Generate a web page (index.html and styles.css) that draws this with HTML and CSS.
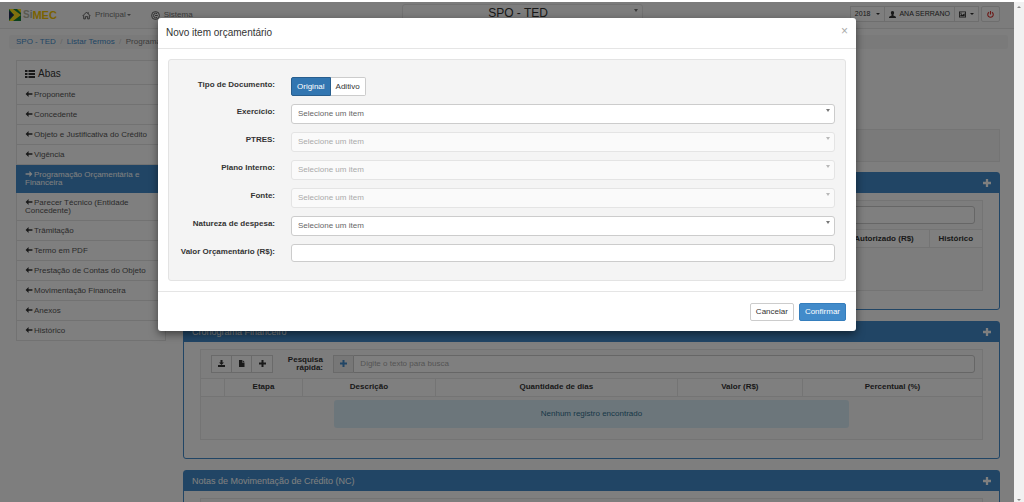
FILE: index.html
```html
<!DOCTYPE html>
<html lang="pt-BR">
<head>
<meta charset="utf-8">
<title>SIMEC - SPO - TED</title>
<link rel="stylesheet" href="styles.css">
</head>
<body>
<svg class="sprite" aria-hidden="true">
  <symbol id="i-left" viewBox="0 0 16 14"><path d="M0 7 7 0v5h9v4H7v5z"/></symbol>
  <symbol id="i-right" viewBox="0 0 16 14"><path d="M16 7 9 0v5H0v4h9v5z"/></symbol>
  <symbol id="i-plus" viewBox="0 0 14 14"><path d="M5 0h4v5h5v4H9v5H5V9H0V5h5z"/></symbol>
  <symbol id="i-list" viewBox="0 0 20 16"><path d="M0 0h5v4H0zM7 0h13v4H7zM0 6h5v4H0zM7 6h13v4H7zM0 12h5v4H0zM7 12h13v4H7z"/></symbol>
  <symbol id="i-down" viewBox="0 0 14 14"><path d="M5 0h4v5h3L7 10 2 5h3zM0 10h14v4H0z"/></symbol>
  <symbol id="i-file" viewBox="0 0 12 14"><path d="M1 0h6v5h5v9H1zM8 0l4 4H8z"/></symbol>
  <symbol id="i-user" viewBox="0 0 14 14"><path d="M7 0c2.400 0 3.400 1.700 3.200 4-.1 1.500-.7 2.600-1.400 3.300v1.500L13 11c.7.400 1 1 1 3H0c0-2 .3-2.600 1-3l4.200-2.200V7.300C4.500 6.600 3.900 5.500 3.800 4 3.600 1.700 4.600 0 7 0z"/></symbol>
  <symbol id="i-picture" viewBox="0 0 16 14"><path fill-rule="evenodd" d="M0 0h16v14H0zM2 2v10h12V2zM3 11V8l3-2 2 2 4-4 1 2v5zM3 3h3v2H3z"/></symbol>
  <symbol id="i-power" viewBox="0 0 14 14"><path fill="none" stroke="currentColor" stroke-width="2.200" d="M4 2.500a5.500 5.500 0 1 0 6 0M7 0v7"/></symbol>
  <symbol id="i-home" viewBox="0 0 16 16"><path fill="none" stroke="currentColor" stroke-width="1.600" d="M1 9 8 2l7 7M3 8v6h3v-4h4v4h3V8M11 2v3"/></symbol>
  <symbol id="i-target" viewBox="0 0 16 16"><path fill="none" stroke="currentColor" stroke-width="1.600" d="M8 1a7 7 0 1 0 7 7 7 7 0 0 0-7-7zM11 5a4 4 0 1 0 0 6M7 8h5"/></symbol>
</svg>

<div class="window">
  <div class="viewport">
    <header class="navbar">
      <nav class="nav-left">
        <a class="brand" href="#" aria-label="SIMEC">
          <svg class="flag" viewBox="0 0 12 12" aria-hidden="true"><path fill="#17823b" d="M0 0h12v12H0z"/><path fill="#ffe01c" d="M0 0h4l8 6-8 6H0l5-6z"/><path fill="#222a55" d="M0 2 5 6 0 10z"/><path fill="#ffe01c" d="M8 0h4v4z"/></svg>
          <span class="brand-si">Si</span><span class="brand-mec">MEC</span>
        </a>
        <a class="nav-link" href="#"><svg class="nav-icon"><use href="#i-home"/></svg>Principal<span class="caret"></span></a>
        <a class="nav-link" href="#"><svg class="nav-icon"><use href="#i-target"/></svg>Sistema</a>
      </nav>
      <div class="select-wrap">
        <select class="module" aria-label="Módulo"><option>SPO - TED</option></select>
      </div>
      <div class="nav-right">
        <div class="group">
          <button class="tool" type="button">2018 <span class="caret wide"></span></button>
          <button class="tool" type="button"><svg class="icon"><use href="#i-user"/></svg>ANA SERRANO</button>
          <button class="tool" type="button" aria-label="Tema"><svg class="icon"><use href="#i-picture"/></svg><span class="caret"></span></button>
        </div>
        <button class="tool power" type="button" aria-label="Sair"><svg class="icon"><use href="#i-power"/></svg></button>
      </div>
    </header>

    <nav class="breadcrumb">
      <a href="#">SPO - TED</a><i>/</i><a href="#">Listar Termos</a><i>/</i><span>Programação Orçamentária</span>
    </nav>

    <div class="columns">
      <aside class="tabs">
        <h2 class="tabs-title"><svg class="list-icon"><use href="#i-list"/></svg>Abas</h2>
        <a href="#"><svg class="arrow"><use href="#i-left"/></svg>Proponente</a>
        <a href="#"><svg class="arrow"><use href="#i-left"/></svg>Concedente</a>
        <a href="#"><svg class="arrow"><use href="#i-left"/></svg>Objeto e Justificativa do Crédito</a>
        <a href="#"><svg class="arrow"><use href="#i-left"/></svg>Vigência</a>
        <a class="active" href="#"><svg class="arrow"><use href="#i-right"/></svg>Programação Orçamentária e Financeira</a>
        <a href="#"><svg class="arrow"><use href="#i-left"/></svg>Parecer Técnico (Entidade Concedente)</a>
        <a href="#"><svg class="arrow"><use href="#i-left"/></svg>Trâmitação</a>
        <a href="#"><svg class="arrow"><use href="#i-left"/></svg>Termo em PDF</a>
        <a href="#"><svg class="arrow"><use href="#i-left"/></svg>Prestação de Contas do Objeto</a>
        <a href="#"><svg class="arrow"><use href="#i-left"/></svg>Movimentação Financeira</a>
        <a href="#"><svg class="arrow"><use href="#i-left"/></svg>Anexos</a>
        <a href="#"><svg class="arrow"><use href="#i-left"/></svg>Histórico</a>
      </aside>

      <main class="content">
        <div class="summary"></div>

        <section class="panel">
          <h3 class="panel-head"><span></span><svg class="expand"><use href="#i-plus"/></svg></h3>
          <div class="panel-body">
            <div class="listing">
              <div class="search-row">
                <div></div><div></div>
                <div class="search"><input type="text" aria-label="Pesquisa"></div>
              </div>
              <table class="grid">
                <colgroup><col class="w-rest"><col class="w-aut"><col class="w-hist"></colgroup>
                <thead><tr><th></th><th>Autorizado (R$)</th><th>Histórico</th></tr></thead>
                <tbody><tr><td colspan="3"></td></tr></tbody>
              </table>
            </div>
          </div>
        </section>

        <section class="panel">
          <h3 class="panel-head"><span>Cronograma Financeiro</span><svg class="expand"><use href="#i-plus"/></svg></h3>
          <div class="panel-body">
            <div class="listing">
              <div class="search-row">
                <div class="group">
                  <button class="act" type="button" aria-label="Baixar"><svg class="icon"><use href="#i-down"/></svg></button>
                  <button class="act" type="button" aria-label="Arquivo"><svg class="icon"><use href="#i-file"/></svg></button>
                  <button class="act" type="button" aria-label="Adicionar"><svg class="icon"><use href="#i-plus"/></svg></button>
                </div>
                <label for="busca">Pesquisa rápida:</label>
                <div class="search">
                  <button class="addon" type="button" aria-label="Mais filtros"><svg class="icon"><use href="#i-plus"/></svg></button>
                  <input id="busca" type="text" placeholder="Digite o texto para busca">
                </div>
              </div>
              <table class="grid">
                <colgroup><col class="w-a"><col class="w-b"><col class="w-c"><col class="w-d"><col class="w-e"><col class="w-f"></colgroup>
                <thead><tr><th></th><th>Etapa</th><th>Descrição</th><th>Quantidade de dias</th><th>Valor (R$)</th><th>Percentual (%)</th></tr></thead>
                <tbody><tr><td colspan="6"><div class="alert">Nenhum registro encontrado</div></td></tr></tbody>
              </table>
            </div>
          </div>
        </section>

        <section class="panel">
          <h3 class="panel-head"><span>Notas de Movimentação de Crédito (NC)</span><svg class="expand"><use href="#i-plus"/></svg></h3>
          <div class="panel-body"><div class="listing"><div class="search-row"></div></div></div>
        </section>
      </main>
    </div>

    <div class="backdrop">
      <form class="modal" role="dialog" aria-labelledby="titulo">
        <div class="modal-head">
          <h1 id="titulo">Novo item orçamentário</h1>
          <button class="close" type="button" aria-label="Fechar">×</button>
        </div>
        <div class="modal-body">
          <div class="well">
            <div class="field" role="group" aria-labelledby="tipo">
              <span class="label" id="tipo">Tipo de Documento:</span>
              <div class="group">
                <button class="btn toggle on" type="button" aria-pressed="true">Original</button>
                <button class="btn toggle" type="button" aria-pressed="false">Aditivo</button>
              </div>
            </div>
            <div class="field"><label class="label" for="exercicio">Exercício:</label><div class="select-wrap"><select id="exercicio"><option>Selecione um item</option></select></div></div>
            <div class="field"><label class="label" for="ptres">PTRES:</label><div class="select-wrap off"><select id="ptres" disabled><option>Selecione um item</option></select></div></div>
            <div class="field"><label class="label" for="plano">Plano Interno:</label><div class="select-wrap off"><select id="plano" disabled><option>Selecione um item</option></select></div></div>
            <div class="field"><label class="label" for="fonte">Fonte:</label><div class="select-wrap off"><select id="fonte" disabled><option>Selecione um item</option></select></div></div>
            <div class="field"><label class="label" for="natureza">Natureza de despesa:</label><div class="select-wrap"><select id="natureza"><option>Selecione um item</option></select></div></div>
            <div class="field"><label class="label" for="valor">Valor Orçamentário (R$):</label><input id="valor" type="text"></div>
          </div>
        </div>
        <div class="modal-foot">
          <button class="btn" type="button">Cancelar</button>
          <button class="btn primary" type="submit">Confirmar</button>
        </div>
      </form>
    </div>
  </div>
  <div class="scrollbar" aria-hidden="true"><span class="up"></span><span class="dn"></span></div>
</div>
</body>
</html>
```

FILE: styles.css
```css
* { box-sizing: border-box; }
body { margin: 0; height: 100vh; overflow: hidden; background: #fff; color: #333; font: 8px/10px "Liberation Sans", Arial, sans-serif; }
button, input, select { font: inherit; color: inherit; margin: 0; }
h1, h2, h3 { margin: 0; font-weight: 400; }
a { text-decoration: none; color: #428bca; }
svg { fill: currentColor; }
.sprite { position: absolute; width: 0; height: 0; }
.window { display: flex; height: 100vh; padding-top: 2px; }
.viewport { position: relative; flex: 1; min-width: 0; overflow: hidden; background: #fdfdfd; }
.scrollbar { width: 10px; background: #f1f1f1; display: flex; flex-direction: column; justify-content: space-between; align-items: center; padding: 4px 0 1px; }
.scrollbar span { border: 2px solid transparent; }
.scrollbar .up { border-top: 0; border-bottom-color: #888; }
.scrollbar .dn { border-bottom: 0; border-top-color: #888; }

.icon { width: 7px; height: 7px; }
.caret { border: 2px solid transparent; border-top-color: currentColor; border-bottom: 0; margin-left: 1px; }
.caret.wide { margin-left: 6px; }
.group { display: flex; }

/* top bar */
.navbar { display: grid; grid-template-columns: 40fr 24fr 37fr; height: 27px; background: #f8f8f8; border-bottom: 1px solid #e4e4e4; }
.nav-left { display: flex; align-items: center; padding-left: 9px; color: #777; }
.brand { display: flex; align-items: center; width: 73px; font-weight: 700; font-size: 11px; }
.flag { width: 12px; height: 12px; margin-right: 2px; }
.brand-si { color: #b5b5a0; font-size: 10px; }
.brand-mec { color: #f5c400; }
.nav-link { display: flex; align-items: center; color: #777; margin-right: 20px; }
.nav-icon { width: 9px; height: 9px; margin-right: 4px; color: #555; }
.nav-right { display: flex; gap: 3px; justify-content: flex-end; align-items: flex-start; padding: 4px 14px 0 0; }
.tool { display: flex; align-items: center; height: 16px; padding: 0 4px; border: 1px solid #ddd; margin-left: -1px; background: #fcfcfc; font-size: 7px; white-space: nowrap; }
.tool .icon { margin-right: 3px; }
.power { color: #d9302c; border-radius: 2px; padding: 0 5px; }
.power .icon { margin: 0; }

.select-wrap { position: relative; }
.select-wrap::after { content: ""; position: absolute; right: 5px; top: 5px; border: 2px solid transparent; border-top: 3px solid #777; border-bottom: 0; pointer-events: none; }
.select-wrap.off::after { opacity: .5; }
select { appearance: none; display: block; width: 100%; height: 20px; padding: 0 6px; border: 1px solid #ccc; border-radius: 3px; background: #fff; color: #666; }
select:disabled { background: #fafafa; border-color: #e4e4e4; color: #aaa; opacity: 1; }
.navbar .select-wrap { padding-top: 2px; }
.navbar .select-wrap::after { top: 7px; }
.module { height: 18px; font-size: 12px; text-align: center; text-align-last: center; color: #333; background: #fbfbfb; border-color: #e4e4e4; padding: 0 16px 0 8px; }

.breadcrumb { display: flex; margin: 6px 6px 0 9px; padding: 2px 7px; height: 14px; background: #f5f5f5; border-radius: 2px; color: #777; }
.breadcrumb i { width: 11px; text-align: center; font-style: normal; color: #ccc; }

/* page columns */
.columns { display: grid; grid-template-columns: 150px 1fr; gap: 17px; padding: 11px 14px 0 16px; }
.tabs { align-self: start; border: 1px solid #e4e4e4; border-bottom: 0; background: #fff; }
.tabs-title { display: flex; align-items: center; height: 24px; padding: 2px 8px 0; border-bottom: 1px solid #e4e4e4; font-size: 10px; }
.list-icon { width: 10px; height: 8px; margin-right: 3px; }
.tabs a { display: block; padding: 6px 16px 5px 8px; border-bottom: 1px solid #e4e4e4; color: #555; line-height: 8px; }
.tabs a.active { margin-left: -1px; padding-left: 9px; background: #428bca; border-color: #428bca; color: #fff; }
.arrow { width: 8px; height: 6px; margin-right: 1px; color: #333; }
.active .arrow { color: #fff; }

.summary { height: 33px; margin: 69px 0 10px; background: #f5f5f5; border: 1px solid #e8e8e8; }
.panel { margin-bottom: 11px; border: 1px solid #428bca; border-radius: 3px; background: #fff; }
.panel-head { display: flex; align-items: center; justify-content: space-between; height: 20px; padding: 0 8px; background: #428bca; color: #fff; font-size: 9px; }
.expand { width: 8px; height: 8px; }
.panel-body { padding: 7px 16px 18px; }
.listing { border: 1px solid #e8e8e8; background: #fafafa; }
.search-row { display: grid; grid-template-columns: 62px 40px 1fr; align-items: center; column-gap: 10px; padding: 5px 7px 5px 10px; }
.search-row label { text-align: right; font-weight: 700; line-height: 8px; }
.act, .addon { display: grid; place-items: center; width: 21px; height: 18px; padding: 0; border: 1px solid #d4d4d4; background: #fff; }
.act + .act { border-left: 0; }
.search { display: flex; }
.addon { background: #eee; color: #428bca; border-right: 0; }
input { display: block; width: 100%; height: 18px; padding: 0 6px; border: 1px solid #ccc; border-radius: 3px; background: #fff; }
.addon + input { border-radius: 0 3px 3px 0; }
input::placeholder { color: #aaa; opacity: 1; }
.grid { width: 100%; border-collapse: collapse; table-layout: fixed; }
.grid th { height: 18px; padding: 0; background: #fff; border: 1px solid #e8e8e8; border-width: 1px 1px 1px 0; text-align: center; }
.grid th:last-child { border-right: 0; }
.grid td { height: 42px; padding: 3px 0 11px; vertical-align: top; }
.w-aut { width: 90px; } .w-hist { width: 53px; }
.w-a { width: 3%; } .w-b { width: 10%; } .w-c { width: 17%; } .w-d { width: 31%; } .w-e { width: 16%; } .w-f { width: 23%; }
.alert { width: 66%; margin: 0 auto; padding: 9px 0; border-radius: 3px; background: #d9edf7; color: #31708f; text-align: center; }

/* dialog */
.backdrop { position: absolute; inset: 0; padding-top: 16px; background: rgba(0, 0, 0, .5); }
.modal { max-width: 698px; margin: 0 auto; border-radius: 3px; background: #fff; box-shadow: 0 3px 8px rgba(0, 0, 0, .5); }
.modal-head { display: flex; align-items: center; justify-content: space-between; height: 31px; padding: 0 8px; border-bottom: 1px solid #e5e5e5; }
.modal-head h1 { font-size: 10px; line-height: 12px; }
.close { padding: 0; border: 0; background: none; color: #aaa; font-size: 12px; line-height: 12px; margin-bottom: 4px; }
.modal-body { padding: 10px; }
.well { display: grid; gap: 8px; padding: 17px 10px 18px; border: 1px solid #e3e3e3; border-radius: 3px; background: #f4f4f4; }
.field { display: grid; grid-template-columns: 96px 1fr; gap: 16px; align-items: start; }
.label { padding-top: 4px; font-weight: 700; line-height: 8px; text-align: right; white-space: nowrap; }
.modal-foot { display: flex; justify-content: flex-end; gap: 5px; padding: 11px 10px 10px; border-top: 1px solid #e5e5e5; }
.btn { height: 18px; padding: 0 5px; border: 1px solid #ccc; border-radius: 2px; background: #fff; color: #333; }
.btn.primary { background: #428bca; border-color: #357ebd; color: #fff; }
.toggle { height: 19px; border-radius: 0 2px 2px 0; border-left: 0; }
.toggle.on { background: #3276b1; border: 1px solid #285e8e; border-radius: 2px 0 0 2px; color: #fff; }
```
